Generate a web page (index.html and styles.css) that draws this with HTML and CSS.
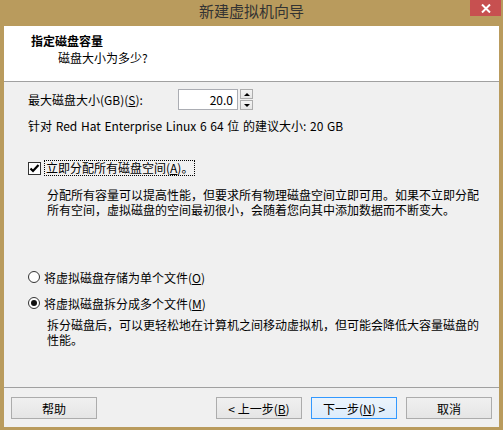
FILE: index.html
```html
<!DOCTYPE html>
<html lang="zh-CN">
<head>
<meta charset="utf-8">
<title>新建虚拟机向导</title>
<link rel="stylesheet" href="styles.css">
</head>
<body>
<div class="window">
  <div class="titlebar">
    <span class="title">新建虚拟机向导</span>
    <div class="close">
      <svg width="10" height="9" viewBox="0 0 10 9"><path d="M1 0.5 L9 8.5 M9 0.5 L1 8.5" stroke="#fff" stroke-width="2" fill="none"/></svg>
    </div>
  </div>
  <div class="client">
    <div class="header">
      <div class="h-title">指定磁盘容量</div>
      <div class="h-sub">磁盘大小为多少?</div>
    </div>
    <div class="body">
      <div class="size-row">
        <span class="size-label">最大磁盘大小(GB)(<u>S</u>):</span>
        <div class="spin-input">20.0</div>
        <div class="spin-btns">
          <div class="spin-btn"><span class="tri-up"></span></div>
          <div class="spin-btn"><span class="tri-down"></span></div>
        </div>
      </div>
      <div class="info">针对 Red Hat Enterprise Linux 6 64 位 的建议大小: 20 GB</div>
      <div class="check-row">
        <span class="checkbox">
          <svg width="11" height="11" viewBox="0 0 11 11"><path d="M1.5 5.5 L4 8 L9.5 2" stroke="#000" stroke-width="2.2" fill="none"/></svg>
        </span>
        <span class="focus-label">立即分配所有磁盘空间(<u>A</u>)。</span>
      </div>
      <div class="desc desc1">
        <div class="desc-line">分配所有容量可以提高性能，但要求所有物理磁盘空间立即可用。如果不立即分配</div>
        <div class="desc-line">所有空间，虚拟磁盘的空间最初很小，会随着您向其中添加数据而不断变大。</div>
      </div>
      <div class="radio-row radio1">
        <span class="radio"></span>
        <span class="radio-label">将虚拟磁盘存储为单个文件(<u>O</u>)</span>
      </div>
      <div class="radio-row radio2">
        <span class="radio checked"></span>
        <span class="radio-label">将虚拟磁盘拆分成多个文件(<u>M</u>)</span>
      </div>
      <div class="desc desc2">
        <div class="desc-line">拆分磁盘后，可以更轻松地在计算机之间移动虚拟机，但可能会降低大容量磁盘的</div>
        <div class="desc-line">性能。</div>
      </div>
    </div>
    <div class="footer">
      <div class="btn">帮助</div>
      <div class="btn-group">
        <div class="btn">&lt; 上一步(<u>B</u>)</div>
        <div class="btn btn-default">下一步(<u>N</u>) &gt;</div>
        <div class="btn">取消</div>
      </div>
    </div>
  </div>
</div>
</body>
</html>
```

FILE: styles.css
```css
* { box-sizing: border-box; }
html, body { margin: 0; padding: 0; }
body {
  width: 503px;
  height: 430px;
  overflow: hidden;
  font-family: "Noto Sans CJK SC", "Noto Sans", sans-serif;
  font-size: 12px;
  color: #000;
}
.window {
  width: 503px;
  height: 430px;
  background: #b99b5d;
  display: flex;
  flex-direction: column;
}
.titlebar {
  height: 26px;
  position: relative;
  display: flex;
  justify-content: center;
  align-items: flex-start;
  padding-top: 1px;
}
.title {
  font-size: 15px;
  line-height: 20px;
  color: #333;
}
.close {
  position: absolute;
  top: 0;
  right: 2px;
  width: 31px;
  height: 16px;
  background: #c75050;
  display: flex;
  align-items: center;
  justify-content: center;
}
.client {
  flex: 1;
  margin: 0 4px 3px 4px;
  background: #f0f0f0;
  display: flex;
  flex-direction: column;
}
.header {
  height: 56px;
  background: #fff;
  border-bottom: 1px solid #a0a0a0;
  padding: 7px 0 0 27px;
}
.h-title {
  font-weight: bold;
  line-height: 16px;
}
.h-sub {
  padding-left: 27px;
  margin-top: 2px;
  line-height: 14px;
}
.body {
  flex: 1;
  padding: 7px 0 0 24px;
}
.size-row {
  display: flex;
  align-items: center;
  height: 21px;
}
.size-label {
  width: 150px;
  line-height: 15px;
}
u { text-decoration: underline; text-underline-offset: 1px; }
.spin-input {
  width: 60px;
  height: 21px;
  background: #fff;
  border: 1px solid #abadb3;
  text-align: right;
  padding-right: 4px;
  line-height: 19px;
}
.spin-btns {
  margin-left: 2px;
  width: 13px;
  height: 21px;
  display: flex;
  flex-direction: column;
  gap: 1px;
}
.spin-btn {
  flex: 1;
  border: 1px solid #adadad;
  background: linear-gradient(#f4f4f4, #e6e6e6);
  display: flex;
  align-items: center;
  justify-content: center;
}
.tri-up, .tri-down {
  width: 0;
  height: 0;
  border-left: 3px solid transparent;
  border-right: 3px solid transparent;
}
.tri-up { border-bottom: 3px solid #000; }
.tri-down { border-top: 3px solid #000; }
.info {
  margin-top: 8px;
  line-height: 15px;
  word-spacing: 1px;
}
.check-row {
  margin-top: 27px;
  height: 16px;
  display: flex;
  align-items: center;
}
.checkbox {
  width: 13px;
  height: 13px;
  border: 1px solid #333;
  background: #fff;
  display: flex;
  align-items: center;
  justify-content: center;
}
.focus-label {
  margin-left: 3px;
  border: 1px dotted #000;
  padding: 0 1px;
  line-height: 14px;
}
.desc {
  padding-left: 19px;
}
.desc-line {
  height: 15px;
  line-height: 15px;
  white-space: nowrap;
}
.desc1 { margin-top: 11px; }
.radio-row {
  height: 16px;
  display: flex;
  align-items: center;
}
.radio1 { margin-top: 52px; }
.radio2 { margin-top: 10px; }
.radio {
  width: 12px;
  height: 12px;
  border: 1px solid #333;
  border-radius: 50%;
  background: #fff;
  display: flex;
  align-items: center;
  justify-content: center;
}
.radio.checked::after {
  content: "";
  width: 6px;
  height: 6px;
  border-radius: 50%;
  background: #111;
}
.radio-label {
  margin-left: 4px;
  line-height: 15px;
}
.desc2 { margin-top: 6px; }
.footer {
  border-top: 1px solid #a0a0a0;
  padding: 9px 7px 8px 7px;
  display: flex;
  justify-content: space-between;
}
.btn-group {
  display: flex;
  gap: 9px;
}
.btn {
  width: 86px;
  height: 22px;
  border: 1px solid #acacac;
  background: linear-gradient(#f0f0f0, #e5e5e5);
  display: flex;
  align-items: center;
  justify-content: center;
  line-height: 15px;
}
.btn-default {
  border-color: #3399ff;
  background: linear-gradient(#ecf4fc, #dcecfc);
}
```
